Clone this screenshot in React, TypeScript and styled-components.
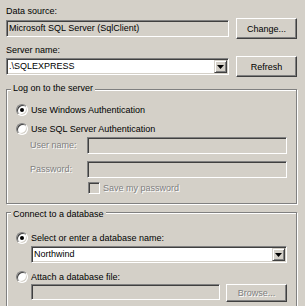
import React from 'react';
import styled, { createGlobalStyle } from 'styled-components';

const GlobalStyle = createGlobalStyle`
  html, body {
    margin: 0;
    padding: 0;
    background: #d4d0c8;
  }
  body {
    font-family: "Liberation Sans", Arial, sans-serif;
    font-size: 9px;
    color: #000;
  }
`;

const Dialog = styled.div`
  width: 305px;
  height: 306px;
  box-sizing: border-box;
  padding: 6px 8px 0 6px;
  overflow: hidden;
  display: flex;
  flex-direction: column;
`;

const Label = styled.div<{ $gap?: number }>`
  line-height: 11px;
  margin-top: ${p => p.$gap ?? 0}px;
  white-space: nowrap;
`;

const Row = styled.div<{ $gap?: number }>`
  display: flex;
  align-items: center;
  gap: 7px;
  height: 21px;
  margin-top: ${p => p.$gap ?? 0}px;
`;

const Sunken = styled.div<{ $white?: boolean; $h?: number }>`
  box-sizing: border-box;
  height: ${p => p.$h ?? 17}px;
  border: 1px solid;
  border-color: #808080 #fff #fff #808080;
  padding: 1px;
  box-shadow: inset 1px 1px #404040, inset -1px -1px #d4d0c8;
  background: ${p => (p.$white ? '#fff' : '#d4d0c8')};
  display: flex;
  align-items: stretch;
  flex: 1;
  min-width: 0;
`;

const FieldText = styled.span`
  flex: 1;
  line-height: 13px;
  padding-left: 1px;
  white-space: nowrap;
  overflow: hidden;
`;

const ArrowButton = styled.span`
  width: 13px;
  box-sizing: border-box;
  background: #d4d0c8;
  border: 1px solid;
  border-color: #d4d0c8 #404040 #404040 #d4d0c8;
  box-shadow: inset 1px 1px #fff, inset -1px -1px #808080;
  display: flex;
  align-items: center;
  justify-content: center;
`;

const Button = styled.button<{ $h?: number; $disabled?: boolean }>`
  width: 61px;
  height: ${p => p.$h ?? 21}px;
  flex: none;
  box-sizing: border-box;
  padding: 0;
  margin: 0;
  font: inherit;
  font-size: 9px;
  background: #d4d0c8;
  border: 1px solid;
  border-color: #fff #404040 #404040 #fff;
  box-shadow: inset -1px -1px #808080;
  color: ${p => (p.$disabled ? '#808080' : '#000')};
  text-shadow: ${p => (p.$disabled ? '1px 1px 0 #fff' : 'none')};
`;

const Group = styled.div<{ $gap: number; $top: number }>`
  position: relative;
  margin-top: ${p => p.$gap}px;
  border: 1px solid #808080;
  box-shadow: inset 1px 1px #fff, 1px 1px #fff;
  padding: ${p => p.$top}px 9px 9px 9px;
  display: flex;
  flex-direction: column;
  flex: none;
`;

const Legend = styled.span<{ $top: number }>`
  position: absolute;
  top: ${p => p.$top}px;
  left: 4px;
  padding: 0 2px;
  background: #d4d0c8;
  line-height: 11px;
  white-space: nowrap;
`;

const OptionRow = styled.label<{ $gap?: number }>`
  display: flex;
  align-items: center;
  gap: 3px;
  height: 13px;
  margin-top: ${p => p.$gap ?? 0}px;
  white-space: nowrap;
`;

const RadioMark = styled.span<{ $checked?: boolean }>`
  position: relative;
  width: 12px;
  height: 12px;
  box-sizing: border-box;
  border-radius: 50%;
  border: 1px solid;
  border-color: #808080 #fff #fff #808080;
  box-shadow: inset 1px 1px #404040, inset -1px -1px #d4d0c8;
  background: #fff;
  flex: none;

  &::after {
    content: '';
    display: ${p => (p.$checked ? 'block' : 'none')};
    position: absolute;
    left: 3px;
    top: 3px;
    width: 4px;
    height: 4px;
    border-radius: 50%;
    background: #000;
  }
`;

const CheckMark = styled.span`
  width: 12px;
  height: 12px;
  box-sizing: border-box;
  border: 1px solid;
  border-color: #808080 #fff #fff #808080;
  box-shadow: inset 1px 1px #404040, inset -1px -1px #d4d0c8;
  background: #d4d0c8;
  flex: none;
`;

const FieldRow = styled.div<{ $gap?: number; $indent: number }>`
  display: flex;
  align-items: flex-start;
  gap: 6px;
  margin-top: ${p => p.$gap ?? 0}px;
  padding-left: ${p => p.$indent}px;
`;

const SideLabel = styled.span`
  width: 57px;
  flex: none;
  line-height: 17px;
  margin-right: -6px;
`;

const Dim = styled.span`
  color: #808080;
  text-shadow: 1px 1px 0 #fff;
`;

const Arrow = () => (
  <svg width="7" height="4" viewBox="0 0 7 4">
    <polygon points="0,0 7,0 3.5,4" fill="#000" />
  </svg>
);

export default function App() {
  return (
    <Dialog>
      <GlobalStyle />
      <Label>Data source:</Label>
      <Row $gap={1}>
        <Sunken>
          <FieldText>Microsoft SQL Server (SqlClient)</FieldText>
        </Sunken>
        <Button>Change...</Button>
      </Row>

      <Label $gap={6}>Server name:</Label>
      <Row>
        <Sunken $white>
          <FieldText>.\SQLEXPRESS</FieldText>
          <ArrowButton>
            <Arrow />
          </ArrowButton>
        </Sunken>
        <Button>Refresh</Button>
      </Row>

      <Group $gap={12} $top={13}>
        <Legend $top={-7}>Log on to the server</Legend>
        <OptionRow>
          <RadioMark $checked />
          Use Windows Authentication
        </OptionRow>
        <OptionRow $gap={6}>
          <RadioMark />
          Use SQL Server Authentication
        </OptionRow>
        <FieldRow $gap={2} $indent={14}>
          <SideLabel>
            <Dim>User name:</Dim>
          </SideLabel>
          <Sunken />
        </FieldRow>
        <FieldRow $gap={7} $indent={14}>
          <SideLabel>
            <Dim>Password:</Dim>
          </SideLabel>
          <Sunken />
        </FieldRow>
        <FieldRow $gap={3} $indent={72}>
          <OptionRow>
            <CheckMark />
            <Dim>Save my password</Dim>
          </OptionRow>
        </FieldRow>
      </Group>

      <Group $gap={8} $top={18}>
        <Legend $top={-4}>Connect to a database</Legend>
        <OptionRow>
          <RadioMark $checked />
          Select or enter a database name:
        </OptionRow>
        <FieldRow $gap={2} $indent={15}>
          <Sunken $white>
            <FieldText>Northwind</FieldText>
            <ArrowButton>
              <Arrow />
            </ArrowButton>
          </Sunken>
        </FieldRow>
        <OptionRow $gap={7}>
          <RadioMark />
          Attach a database file:
        </OptionRow>
        <FieldRow $gap={1} $indent={15}>
          <Sunken $h={16} />
          <Button $h={18} $disabled>
            Browse...
          </Button>
        </FieldRow>
      </Group>
    </Dialog>
  );
}
